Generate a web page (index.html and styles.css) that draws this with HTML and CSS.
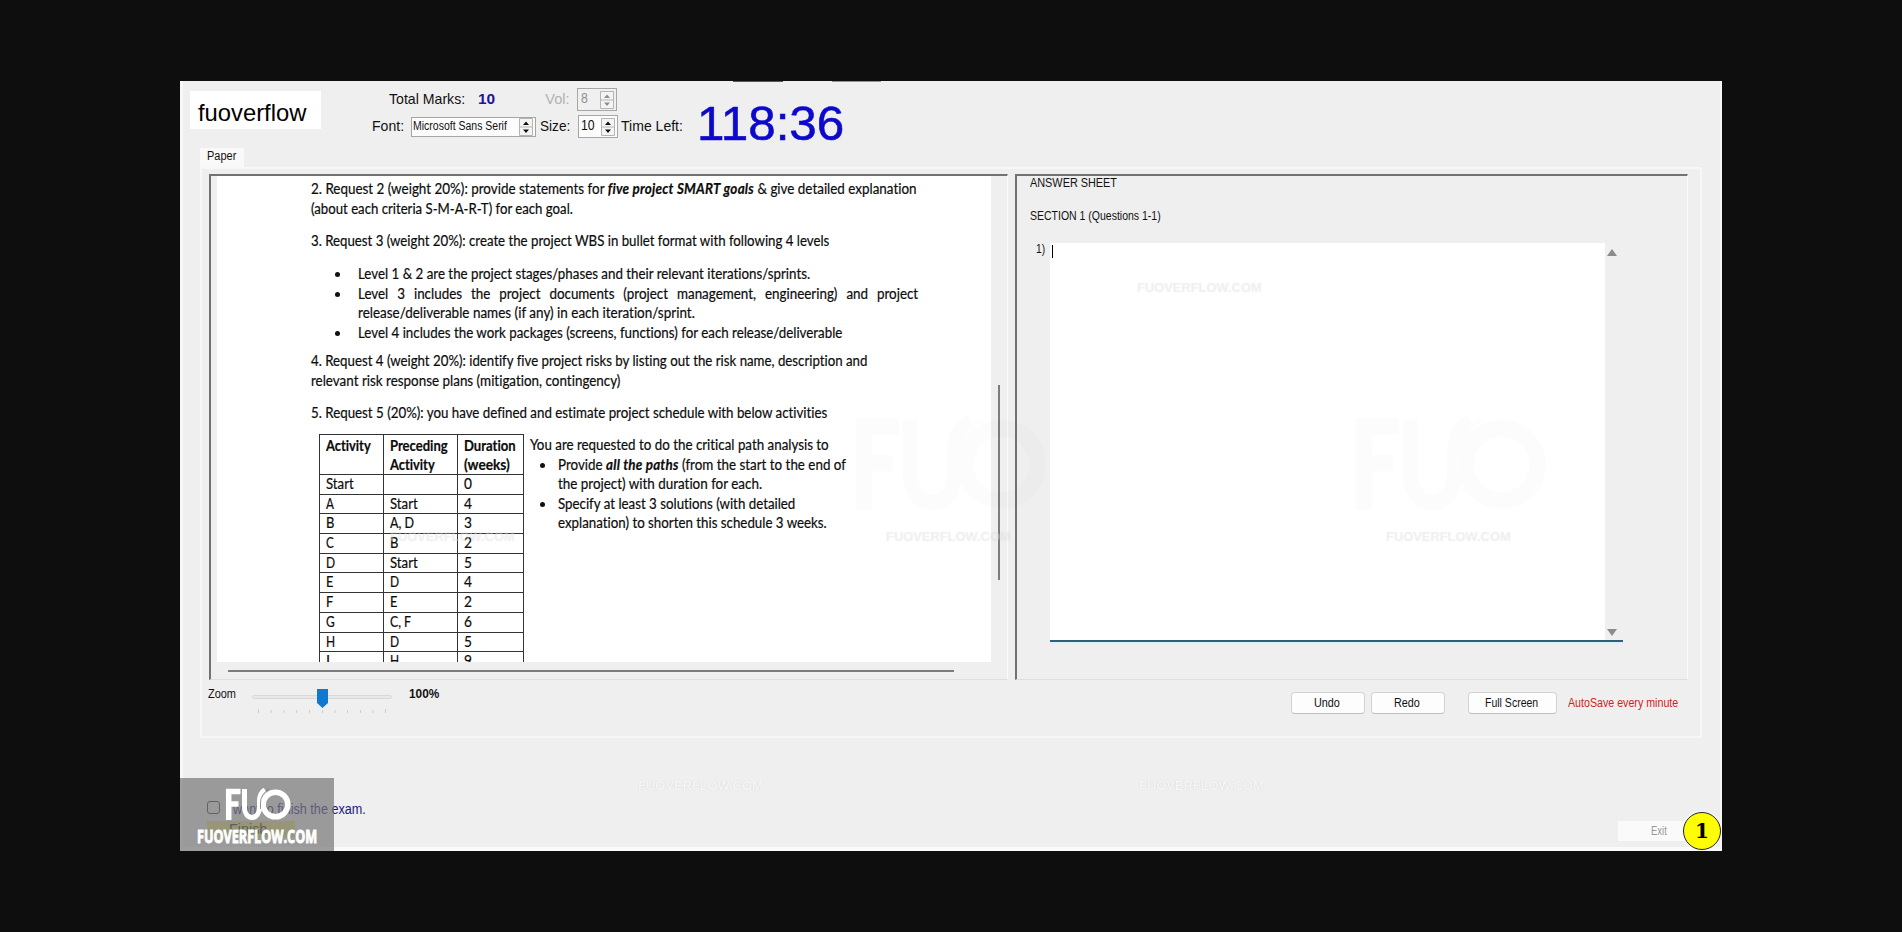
FILE: index.html
```html
<!DOCTYPE html>
<html lang="en">
<head>
<meta charset="utf-8">
<title>fuoverflow</title>
<link rel="stylesheet" href="styles.css">
</head>
<body>
<svg class="defs" width="0" height="0" aria-hidden="true">
  <symbol id="fuo" viewBox="0 0 66 34">
    <path d="M3.700 32V3.500H15.500M4 16H13.500" fill="none" stroke="currentColor" stroke-width="5.500"/>
    <path d="M19.500 1V20A7.500 9.500 0 0 0 34.500 20V13Q34.500 5 40 1.800" fill="none" stroke="currentColor" stroke-width="5"/>
    <circle cx="50.500" cy="16.500" r="12.300" fill="none" stroke="currentColor" stroke-width="5.500"/>
    <path d="M44 1.300Q35.500 6 35.500 15V21" fill="none" stroke="#777" stroke-width=".8" class="seam"/>
  </symbol>
  <symbol id="spin" viewBox="0 0 14 18">
    <path d="M.5 .5H13.5V17.5H.5ZM.5 9H13.5" fill="#f4f4f4" stroke="#b4b4b4"/>
    <path d="M7 3.400L10 7H4ZM7 15L4 11.400H10Z" fill="currentColor"/>
  </symbol>
</svg>

<main class="window">
  <header class="header">
    <div class="brand"><span class="fit" data-w="108">fuoverflow</span></div>
    <div class="fields">
      <div class="row row-top">
        <span class="fit" data-w="76">Total Marks:</span>
        <b class="marks fit" data-w="17">10</b>
        <span class="muted fit" data-w="24">Vol:</span>
        <span class="box box-vol"><span class="fit" data-w="7">8</span><svg class="spin"><use href="#spin"/></svg></span>
      </div>
      <div class="row">
        <span class="fit" data-w="32">Font:</span>
        <span class="box box-font"><span class="fit" data-w="94">Microsoft Sans Serif</span><svg class="spin"><use href="#spin"/></svg></span>
        <span class="lbl-size fit" data-w="30">Size:</span>
        <span class="box box-size"><span class="fit" data-w="14">10</span><svg class="spin"><use href="#spin"/></svg></span>
        <span class="lbl-time fit" data-w="62">Time Left:</span>
      </div>
    </div>
    <div class="clock"><span class="fit" data-w="147">118:36</span></div>
    <i class="edge edge-blue"></i><i class="edge edge-red"></i>
  </header>

  <div class="tabs"><div class="tab"><span class="fit" data-w="29">Paper</span></div></div>

  <section class="panel">
    <div class="panes">
      <div class="pane pane-doc">
        <div class="viewport">
          <article class="doc">
            <p><span class="fit" data-w="606">2. Request 2 (weight 20%): provide statements for <b class="wide"><i>five project SMART goals</i></b> &amp; give detailed explanation</span></p>
            <p><span class="fit" data-w="262">(about each criteria S-M-A-R-T) for each goal.</span></p>
            <p class="gap"><span class="fit" data-w="518">3. Request 3 (weight 20%): create the project WBS in bullet format with following 4 levels</span></p>
            <ul class="levels">
              <li><span class="fit" data-w="452">Level 1 &amp; 2 are the project stages/phases and their relevant iterations/sprints.</span></li>
              <li><span class="fit spread" data-w="560">Level 3 includes the project documents (project management, engineering) and project</span><br><span class="fit" data-w="337">release/deliverable names (if any) in each iteration/sprint.</span></li>
              <li><span class="fit" data-w="484">Level 4 includes the work packages (screens, functions) for each release/deliverable</span></li>
            </ul>
            <p><span class="fit" data-w="556">4. Request 4 (weight 20%): identify five project risks by listing out the risk name, description and</span></p>
            <p><span class="fit" data-w="309">relevant risk response plans (mitigation, contingency)</span></p>
            <p class="gap"><span class="fit" data-w="516">5. Request 5 (20%): you have defined and estimate project schedule with below activities</span></p>
            <div class="plan">
              <table class="activities">
                <tr class="head"><th><span class="fit" data-w="45">Activity</span></th><th><span class="fit" data-w="58">Preceding</span><br><span class="fit" data-w="45">Activity</span></th><th><span class="fit" data-w="52">Duration</span><br><span class="fit" data-w="46">(weeks)</span></th></tr>
                <tr><td><span class="fit" data-w="28">Start</span></td><td></td><td><span class="fit" data-w="7.5">0</span></td></tr>
                <tr><td><span class="fit" data-w="8">A</span></td><td><span class="fit" data-w="28">Start</span></td><td><span class="fit" data-w="7.5">4</span></td></tr>
                <tr><td><span class="fit" data-w="8">B</span></td><td><span class="fit" data-w="24">A, D</span></td><td><span class="fit" data-w="7.5">3</span></td></tr>
                <tr><td><span class="fit" data-w="8">C</span></td><td><span class="fit" data-w="8">B</span></td><td><span class="fit" data-w="7.5">2</span></td></tr>
                <tr><td><span class="fit" data-w="9">D</span></td><td><span class="fit" data-w="28">Start</span></td><td><span class="fit" data-w="7.5">5</span></td></tr>
                <tr><td><span class="fit" data-w="7">E</span></td><td><span class="fit" data-w="9">D</span></td><td><span class="fit" data-w="7.5">4</span></td></tr>
                <tr><td><span class="fit" data-w="7">F</span></td><td><span class="fit" data-w="7">E</span></td><td><span class="fit" data-w="7.5">2</span></td></tr>
                <tr><td><span class="fit" data-w="9">G</span></td><td><span class="fit" data-w="21">C, F</span></td><td><span class="fit" data-w="7.5">6</span></td></tr>
                <tr><td><span class="fit" data-w="9">H</span></td><td><span class="fit" data-w="9">D</span></td><td><span class="fit" data-w="7.5">5</span></td></tr>
                <tr><td>I</td><td><span class="fit" data-w="9">H</span></td><td><span class="fit" data-w="7.5">9</span></td></tr>
              </table>
              <div class="tasks">
                <div><span class="fit" data-w="299">You are requested to do the critical path analysis to</span></div>
                <ul>
                  <li><span class="fit" data-w="288">Provide <b class="wide"><i>all the paths</i></b> (from the start to the end of</span><br><span class="fit" data-w="204">the project) with duration for each.</span></li>
                  <li><span class="fit" data-w="237">Specify at least 3 solutions (with detailed</span><br><span class="fit" data-w="269">explanation) to shorten this schedule 3 weeks.</span></li>
                </ul>
              </div>
            </div>
          </article>
          <i class="vbar"></i>
        </div>
        <i class="hbar"></i>
      </div>

      <div class="pane pane-answer">
        <div class="sheet-title"><span class="fit" data-w="87">ANSWER SHEET</span></div>
        <div class="sheet-title"><span class="fit" data-w="131">SECTION 1 (Questions 1-1)</span></div>
        <div class="question">
          <span class="number"><span class="fit" data-w="9">1)</span></span>
          <div class="editor">
            <i class="caret"></i>
            <div class="scroll">
              <svg width="10" height="7"><path d="M5 0L10 7H0Z" fill="#8c8c8c"/></svg>
              <svg width="10" height="7"><path d="M5 7L10 0H0Z" fill="#8c8c8c"/></svg>
            </div>
          </div>
        </div>
      </div>
    </div>

    <div class="tools">
      <span class="zoom-label"><span class="fit" data-w="28">Zoom</span></span>
      <svg class="slider" width="146" height="30" viewBox="0 0 146 30">
        <rect x="2.5" y="9.500" width="139" height="3" rx="1" fill="#e9e9e9" stroke="#d9d9d9"/>
        <path d="M8.500 23v4M21.200 24v3M34 24v3M46.700 24v3M59.500 24v3M72.500 24v3M85 24v3M97.500 24v3M110.500 24v3M123 24v3M135.500 23v4" stroke="#cccccc"/>
        <path d="M67 3H78V17L72.500 22L67 17Z" fill="#0f78cf"/>
      </svg>
      <b class="percent"><span class="fit" data-w="30">100%</span></b>
      <button class="btn"><span class="fit" data-w="26">Undo</span></button>
      <button class="btn"><span class="fit" data-w="26">Redo</span></button>
      <button class="btn btn-full"><span class="fit" data-w="53">Full Screen</span></button>
      <span class="autosave"><span class="fit" data-w="110">AutoSave every minute</span></span>
    </div>
  </section>

  <footer class="footer">
    <div class="finish">
      <label class="agree"><i class="check"></i><span class="fit" data-w="140">I want to finish the exam.</span></label>
      <div class="finish-btn"><span class="fit" data-w="38">Finish</span></div>
    </div>
    <div class="exit"><span class="fit" data-w="16">Exit</span></div>
  </footer>

  <div class="logo">
    <svg width="66" height="34"><use href="#fuo"/></svg>
    <span class="logo-text"><span class="fit" data-w="120">FUOVERFLOW.COM</span></span>
  </div>
  <div class="badge">1</div>

  <div class="mark m1"><span class="fit" data-w="125">FUOVERFLOW.COM</span></div>
  <div class="mark m2"><span class="fit" data-w="125">FUOVERFLOW.COM</span></div>
  <div class="mark m3"><span class="fit" data-w="125">FUOVERFLOW.COM</span></div>
  <div class="mark m4"><span class="fit" data-w="125">FUOVERFLOW.COM</span></div>
  <div class="mark m5"><span class="fit" data-w="125">FUOVERFLOW.COM</span></div>
  <div class="mark m6"><span class="fit" data-w="125">FUOVERFLOW.COM</span></div>
  <svg class="ghost g1"><use href="#fuo"/></svg>
  <svg class="ghost g2"><use href="#fuo"/></svg>
</main>
<script src="fit.js"></script>
</body>
</html>
```

FILE: styles.css
```css
* { box-sizing: border-box; }
body {
  margin: 0;
  height: 932px;
  padding: 81px 180px;
  background: #0e0e0e;
  color: #111;
  font: 12.5px/16px "Liberation Sans", Arial, sans-serif;
  overflow: hidden;
}
.defs { position: absolute; }
.fit { display: inline-block; white-space: nowrap; transform-origin: 0 50%; }
i { font-style: normal; }
b i { font-style: italic; }

.window {
  position: relative;
  width: 1542px;
  height: 770px;
  background: #efefef;
  box-shadow: inset 3px 0 #f8f8f8, inset -2px 0 #f6f6f6, inset 0 -4px #fafafa;
  overflow: hidden;
}

/* header */
.header { position: relative; display: flex; align-items: flex-start; height: 67px; padding-left: 10px; }
.brand {
  width: 131px;
  height: 38px;
  margin-top: 10px;
  padding: 5px 0 0 8px;
  background: #fff;
  color: #000;
  font-size: 24px;
  line-height: 33px;
}
.fields { margin: 7px 0 0 51px; display: flex; flex-direction: column; gap: 4px; font-size: 14.5px; }
.row { display: flex; align-items: center; height: 23px; line-height: 23px; }
.row-top { padding-left: 17px; }
.marks { margin-left: 13px; color: #1b1496; }
.muted { margin-left: 50px; color: #b2b2b2; }
.box {
  display: flex;
  align-items: center;
  justify-content: space-between;
  height: 23px;
  padding: 0 2px 0 3px;
  border: 1px solid #a6a6a6;
  background: #fcfcfc;
  font-size: 14px;
  line-height: 19px;
}
.box > .fit { padding-bottom: 2px; }
.box-vol { width: 40px; margin-left: 7px; background: #f0f0f0; color: #8e8e8e; }
.box-font { width: 125px; height: 20px; margin-left: 7px; padding-left: 1px; font-size: 12.5px; }
.box-font > .fit { padding-bottom: 0; }
.box-size { width: 40px; margin-left: 8px; padding-left: 2px; }
.lbl-size { margin-left: 4px; }
.lbl-time { margin-left: 3px; }
.spin { width: 14px; height: 18px; flex: none; }
.clock { margin: 16px 0 0 14px; color: #0c08cc; font-size: 49px; line-height: 52px; -webkit-text-stroke: .6px #0c08cc; }
.edge { position: absolute; top: 0; height: 1px; }
.edge-blue { left: 553px; width: 50px; background: #3b5a86; }
.edge-red { left: 652px; width: 49px; background: #d8737a; }

/* tabs */
.tabs { height: 19px; padding-left: 20px; display: flex; }
.tab { width: 44px; height: 19px; padding: 1px 0 0 7px; background: #f9f9f9; line-height: 15px; }
.panel {
  width: 1502px;
  height: 571px;
  margin-left: 20px;
  border: 2px solid #f7f7f7;
  padding: 5px 0 0 7px;
}
.panes { display: flex; gap: 7px; height: 506px; }
.pane { border: solid #727272; border-width: 2px 1px 1px 2px; border-right-color: #fafafa; border-bottom-color: #dedede; }
.pane-doc { width: 799px; }
.pane-answer { width: 673px; padding: 0 0 0 13px; }

/* exam paper */
.viewport { display: flex; }
.doc {
  width: 774px;
  height: 486px;
  margin-left: 6px;
  padding: 3px 0 0 93.500px;
  background: #fff;
  color: #0c0c0c;
  overflow: hidden;
  font: 14.600px/20px Lato, "Open Sans", sans-serif;
  font-variant-ligatures: none;
  -webkit-text-stroke: .2px #0c0c0c;
}
.doc p { margin: 0; height: 20px; }
.doc .gap { margin-top: 12px; }
.doc ul { list-style: none; margin: 0; padding: 0; line-height: 19.67px; }
.doc li { position: relative; }
.doc li::before {
  content: "";
  position: absolute;
  left: -23px;
  top: 8px;
  width: 5px;
  height: 5px;
  border-radius: 50%;
  background: #111;
}
.doc .levels { margin: 13px 0 8px; padding-left: 47px; height: 79px; }
.spread { word-spacing: 6px; }
.wide { letter-spacing: .25px; }
.plan { display: flex; align-items: flex-start; margin: 11px 0 0 8.500px; line-height: 19.500px; }
.activities { border-collapse: collapse; table-layout: fixed; width: 205px; font-size: inherit; }
.activities td, .activities th {
  border: 1px solid #333;
  width: 66px;
  height: 19.7px;
  padding: 0 0 0 6px;
  text-align: left;
  vertical-align: top;
  line-height: 18.600px;
}
.activities td .fit { height: 18px; }
.activities td { height: 19.7px; }
.activities td:first-child, .activities th:first-child { width: 64px; }
.activities td:nth-child(2), .activities th:nth-child(2) { width: 74px; }
.activities .head th { height: 39px; padding-top: 1px; line-height: 19px; }
.tasks { margin: 1px 0 0 6px; }
.tasks ul { padding-left: 28px; line-height: 19.500px; }
.tasks li::before { left: -18px; }
.vbar { width: 2px; height: 195px; margin: 209px 0 0 7px; background: #7d7d7d; }
.hbar { display: block; width: 726px; height: 2px; margin: 8px 0 0 17px; background: #7d7d7d; }

/* answer sheet */
.sheet-title { height: 33px; line-height: 14px; font-size: 12.5px; }
.question { display: flex; padding-top: 1px; }
.number { width: 20px; padding-left: 6px; line-height: 13px; }
.editor {
  display: flex;
  justify-content: space-between;
  width: 573px;
  height: 399px;
  background: #fff;
  border-bottom: 2px solid #2c6179;
  box-shadow: 0 2px #dff1f5;
}
.caret { width: 1px; height: 13px; margin: 2px 0 0 2px; background: #000; }
.scroll { display: flex; flex-direction: column; justify-content: space-between; align-items: center; width: 18px; padding: 6px 4px 4px 0; background: #efefef; }

/* zoom and actions */
.tools { display: flex; align-items: flex-start; padding-top: 6px; height: 40px; color: #111; }
.zoom-label { width: 42px; margin-left: -1px; }
.percent { margin-left: 13px; width: 882px; font-size: 13px; }
.btn {
  flex: none;
  width: 74px;
  height: 22px;
  margin: 6px 6px 0 0;
  padding: 0;
  border: 1px solid #d2d2d2;
  border-bottom-color: #bdbdbd;
  border-radius: 4px;
  background: #fdfdfd;
  font: 12.5px/18px "Liberation Sans", Arial, sans-serif;
  color: #111;
}
.btn .fit { position: relative; left: -1px; }
.btn-full { width: 89px; margin-left: 17px; margin-right: 11px; }
.autosave { margin-top: 9px; color: #cc1f26; }

/* footer */
.footer { display: flex; justify-content: space-between; height: 113px; padding: 60px 37px 0 27px; }
.agree { display: flex; gap: 6px; color: #1d1683; font-size: 14px; line-height: 22px; }
.check { width: 13px; height: 13px; margin-top: 3px; border: 1.5px solid #333; border-radius: 3px; }
.finish-btn { width: 88px; height: 16px; margin-top: 1px; padding-left: 22px; background: #e4e478; color: #222; font-size: 14px; }
.exit { width: 67px; height: 20px; margin-top: 23px; padding: 2px 0 0 33px; background: #fafafa; color: #989898; }

/* overlays */
.logo {
  position: absolute;
  left: 0;
  bottom: 0;
  width: 154px;
  height: 73px;
  padding: 10px 0 0 17px;
  background: rgba(118, 118, 118, .7);
  color: #fff;
}
.logo svg { display: block; margin-left: 28px; }
.logo-text { display: block; margin-top: 4px; font: bold 18px/20px "Open Sans", sans-serif; -webkit-text-stroke: .9px #fff; }
.badge {
  position: absolute;
  right: 1px;
  bottom: 1px;
  width: 38px;
  height: 38px;
  border: 1px solid #222;
  border-radius: 50%;
  background: #fdfd05;
  color: #000;
  font: bold 20px/37px "DejaVu Serif", serif;
  text-align: center;
  box-shadow: 0 0 0 1px #f8f8f8;
}
.mark { position: absolute; color: rgba(255, 255, 255, .4); font-weight: bold; font-size: 13px; line-height: 14px; text-shadow: 0 0 1px rgba(0, 0, 0, .1); }
.m5, .m6 { color: #f6f6f6; text-shadow: 0 0 1px rgba(0, 0, 0, .15); }
.m1 { left: 957px; top: 200px; }
.m2 { left: 210px; top: 449px; }
.m3 { left: 706px; top: 449px; }
.m4 { left: 1206px; top: 449px; }
.m5 { left: 458px; top: 698px; }
.m6 { left: 959px; top: 698px; }
.ghost { position: absolute; top: 335px; width: 200px; height: 100px; color: #000; opacity: .009; }
.g1 { left: 670px; }
.g2 { left: 1170px; }
```

FILE: fit.js
```js
// Condense or widen each text run to its own set width.
document.querySelectorAll('.fit').forEach(function (el) {
  var natural = el.offsetWidth;
  var wanted = Number(el.dataset.w);
  el.style.transform = 'scaleX(' + wanted / natural + ')';
  el.style.marginRight = wanted - natural + 'px';
});
```
